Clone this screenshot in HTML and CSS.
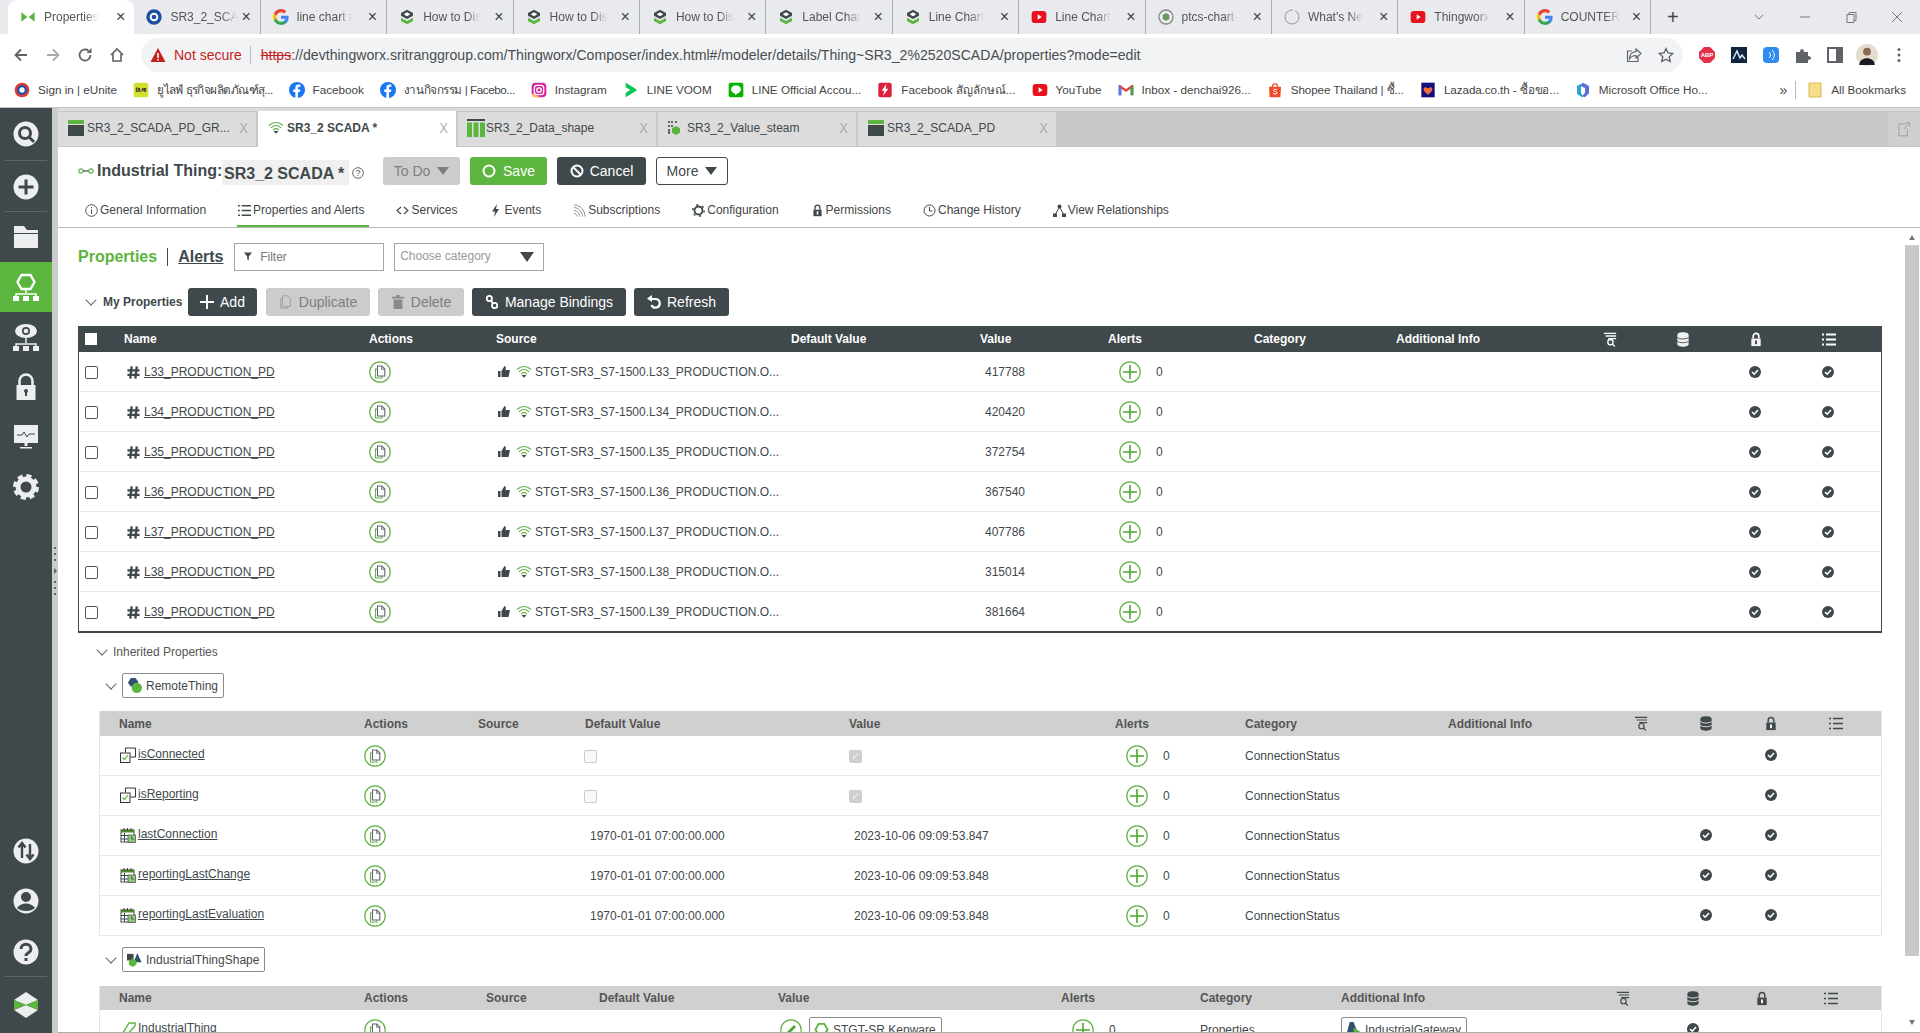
FILE: index.html
```html
<!DOCTYPE html>
<html lang="en">
<head>
<meta charset="utf-8">
<title>Properties</title>
<link rel="stylesheet" href="styles.css">
</head>
<body>
<svg class="sprite" aria-hidden="true">
<symbol id="g" viewBox="0 0 24 24"><path fill="#4285F4" d="M23.500 12.300c0-.8-.1-1.600-.2-2.300H12v4.500h6.500c-.3 1.500-1.100 2.700-2.400 3.500v3h3.900c2.300-2.100 3.500-5.200 3.500-8.700z"/><path fill="#34A853" d="M12 24c3.200 0 6-1.100 8-2.900l-3.900-3c-1.100.7-2.500 1.200-4.100 1.200-3.100 0-5.800-2.100-6.700-5H1.300v3.100C3.300 21.300 7.300 24 12 24z"/><path fill="#FBBC05" d="M5.300 14.300c-.5-1.500-.5-3.100 0-4.600V6.600H1.300c-1.700 3.300-1.700 7.500 0 10.800z"/><path fill="#EA4335" d="M12 4.800c1.800 0 3.300.6 4.600 1.800l3.400-3.400C17.900 1.200 15.200 0 12 0 7.300 0 3.300 2.700 1.300 6.600l4 3.100c.9-2.900 3.600-4.900 6.700-4.900z"/></symbol>
<symbol id="yt" viewBox="0 0 24 24"><rect x="1" y="3" width="22" height="18" rx="5" fill="#e8121e"/><path d="M10 8l6 4-6 4z" fill="#fff"/></symbol>
<symbol id="ptc" viewBox="0 0 24 24"><path d="M12 1l9 5v4l-9 5-9-5V6z" fill="#3f484b"/><path d="M12 5l5 3-5 3-5-3z" fill="#fff"/><path d="M3 13l9 5 9-5v5l-9 5-9-5z" fill="#5cb53e"/></symbol>
<symbol id="tw" viewBox="0 0 24 24"><path d="M2 5l9 7-9 7zM22 5l-9 7 9 7z" fill="#5cb53e"/></symbol>
<symbol id="blue" viewBox="0 0 24 24"><circle cx="12" cy="12" r="11.500" fill="#1c4fa0"/><circle cx="12" cy="12" r="5" fill="none" stroke="#fff" stroke-width="3"/></symbol>
<symbol id="ptcs" viewBox="0 0 24 24"><circle cx="12" cy="12" r="10.500" fill="#eee" stroke="#888" stroke-width="2"/><path d="M12 6l5 3v6l-5 3-5-3V9z" fill="#6a9a5a"/></symbol>
<symbol id="ring" viewBox="0 0 24 24"><circle cx="12" cy="12" r="10.500" fill="none" stroke="#888" stroke-width="1.300" stroke-dasharray="50 4"/></symbol>
<symbol id="fb" viewBox="0 0 24 24"><circle cx="12" cy="12" r="12" fill="#1877f2"/><path d="M13.500 24v-9h3l.6-3.600h-3.600V9.200c0-1 .5-1.900 2-1.900h1.700V4.200s-1.500-.3-3-.3c-3 0-4.700 1.800-4.700 4.800v2.700H6.300V15h3.200v9z" fill="#fff"/></symbol>
<symbol id="ig" viewBox="0 0 24 24"><rect x="1" y="1" width="22" height="22" rx="6" fill="#d6249f"/><path d="M1 17v1a5 5 0 0 0 5 5h8z" fill="#fdc468"/><rect x="5" y="5" width="14" height="14" rx="4" fill="none" stroke="#fff" stroke-width="2"/><circle cx="12" cy="12" r="3.300" fill="none" stroke="#fff" stroke-width="2"/></symbol>
<symbol id="voom" viewBox="0 0 24 24"><path d="M4 1l16 10v2L4 23v-7l7-4-7-4z" fill="#06c755"/></symbol>
<symbol id="lineoa" viewBox="0 0 24 24"><rect x="1" y="1" width="22" height="22" rx="3" fill="#06b100"/><ellipse cx="12" cy="11" rx="7.500" ry="6" fill="#fff"/><path d="M10 16l1 4 4-4z" fill="#fff"/></symbol>
<symbol id="fbpage" viewBox="0 0 24 24"><rect x="2" y="1" width="20" height="22" rx="3" fill="#e01f3d"/><path d="M14 3l-7 10h4l-2 8 8-11h-4z" fill="#fff"/></symbol>
<symbol id="gm" viewBox="0 0 24 24"><path d="M1 5v15h4V10l7 5 7-5v10h4V5l-2-1-9 7-9-7z" fill="#ea4335"/><path d="M1 5v15h4V8z" fill="#4285f4"/><path d="M23 5v15h-4V8z" fill="#34a853"/></symbol>
<symbol id="shopee" viewBox="0 0 24 24"><path d="M3 7h18l-1 16H4z" fill="#ee4d2d"/><path d="M8 8c0-7 8-7 8 0" fill="none" stroke="#ee4d2d" stroke-width="2"/><path d="M15 12c-2-2-6-1-5 1s5 1 5 3-4 3-6 1" fill="none" stroke="#fff" stroke-width="1.500"/></symbol>
<symbol id="laz" viewBox="0 0 24 24"><rect x="2" y="1" width="20" height="22" fill="#12127a"/><path d="M12 19c-9-6-7-11-4-11 2 0 4 2 4 2s2-2 4-2c3 0 5 5-4 11z" fill="#f36d3a"/></symbol>
<symbol id="ms" viewBox="0 0 24 24"><path d="M12 1l9 5v11l-6 6-4-2 4-5V9l-7-3z" fill="#5b6fd8"/><path d="M3 6l9-5-3 5v11l4 5-2 1-8-5z" fill="#2aa3d8"/></symbol>
<symbol id="unite" viewBox="0 0 24 24"><circle cx="12" cy="12" r="11" fill="#e53a2f"/><circle cx="12" cy="12" r="7.500" fill="#1f4fa8"/><circle cx="12" cy="12" r="4" fill="#fff"/></symbol>
<symbol id="ulh" viewBox="0 0 24 24"><rect x="1" y="1" width="22" height="22" rx="4" fill="#d2df2c"/><path d="M5 9v5h3V9zM10 9v5h2M14 9v5l3-5v5h2V9" fill="none" stroke="#333" stroke-width="1.500"/></symbol>

<symbol id="hash" viewBox="0 0 14 14"><path d="M5 .5L3.500 13.500M10.500 .5L9 13.500M.5 4.800h13M.5 9.500h13" fill="none" stroke="#3f484b" stroke-width="2.500"/></symbol>
<symbol id="act" viewBox="0 0 22 22"><circle cx="11" cy="11" r="10.200" fill="none" stroke="#62b24a" stroke-width="1.200"/><path d="M8.500 8H6.500V17h6.500v-2" fill="none" stroke="#62b24a" stroke-width="1.100"/><path d="M8.500 5h4.300l3 3V15H8.500z" fill="none" stroke="#5f686b" stroke-width="1.100"/><path d="M12.500 5v3.300h3.300" fill="none" stroke="#5f686b" stroke-width=".8"/></symbol>
<symbol id="plus" viewBox="0 0 22 22"><circle cx="11" cy="11" r="10.200" fill="none" stroke="#62b24a" stroke-width="1.200"/><path d="M11 4v14M4 11h14" stroke="#4fa72f" stroke-width="1.600"/></symbol>
<symbol id="pencil" viewBox="0 0 22 22"><circle cx="11" cy="11" r="10.200" fill="none" stroke="#62b24a" stroke-width="1.200"/><path d="M6 16l1-3 7-7 2 2-7 7z" fill="#4fa72f"/></symbol>
<symbol id="chk" viewBox="0 0 12 12"><circle cx="6" cy="6" r="6" fill="#3f484b"/><path d="M3 6l2.200 2.200L9 4" fill="none" stroke="#fff" stroke-width="1.600"/></symbol>
<symbol id="wifi" viewBox="0 0 16 13"><path d="M1 4.500c4-4 10-4 14 0M3 6.800c3-3 7-3 10 0M5.200 9c1.600-1.500 4-1.500 5.600 0" fill="none" stroke="#62b24a" stroke-width="1.100"/><path d="M5.500 10h5L8 12.800z" fill="#3f484b"/></symbol>
<symbol id="thumb" viewBox="0 0 12 11"><rect x="0" y="5" width="2.500" height="6" fill="#3f484b"/><path d="M3.500 5L6.500 0c1.500 0 1.500 2 1 4H12L10.500 11h-7z" fill="#3f484b"/></symbol>
<symbol id="boolp" viewBox="0 0 16 16"><path d="M5.500 5.500V1h10v9H10.500" fill="none" stroke="#333" stroke-width="1"/><rect x=".5" y="6" width="9.500" height="9.500" fill="#fff" stroke="#333"/><path d="M2.500 10.500l2 2L8 8" fill="none" stroke="#5cb53e" stroke-width="1.200"/></symbol>
<symbol id="dt" viewBox="0 0 16 16"><rect x="1" y="3" width="13" height="12" fill="#fff" stroke="#3f484b"/><path d="M1 2.500h13v3H1z" fill="#4c8a32"/><path d="M4 1v3M7.500 1v3M11 1v3M1 8.500h7M1 12h7M4.500 6v9" stroke="#3f484b"/><rect x="8" y="8" width="7.500" height="7.500" fill="#8fcb7a" stroke="#3f484b" stroke-width=".7"/><path d="M11.700 9.500v2.500h2" fill="none" stroke="#333" stroke-width=".8"/></symbol>
<symbol id="int" viewBox="0 0 16 16"><path d="M1 15L9 2h6v3l-9 10z" fill="none" stroke="#5cb53e" stroke-width="1.400"/></symbol>
<symbol id="rem" viewBox="0 0 16 16"><path d="M4 0h5l3 4-3 5H4L1 5z" fill="#31506e"/><circle cx="10.500" cy="10.500" r="5.500" fill="#5cb53e"/></symbol>
<symbol id="shape" viewBox="0 0 16 16"><rect x="0" y="2" width="7" height="7" fill="#3f484b"/><path d="M11 1l4.500 10H7z" fill="#31506e"/><path d="M6 7l4 2.300v4.400L6 16l-4-2.300V9.300z" fill="#5cb53e"/></symbol>
<symbol id="hexg" viewBox="0 0 16 16"><path d="M5 2h6l3.500 6L11 14H5L1.500 8z" fill="#fff" stroke="#5cb53e" stroke-width="2"/></symbol>
<symbol id="gate" viewBox="0 0 16 16"><path d="M4 0h4l6 15H0z" fill="#31506e"/><path d="M8 6l7 4v6H8z" fill="#5cb53e"/></symbol>
<symbol id="hq" viewBox="0 0 16 16"><path d="M1 1h14M3 4h12M6 7h9" stroke="#fff" stroke-width="1.500"/><circle cx="8.500" cy="11" r="3" fill="none" stroke="#fff" stroke-width="1.500"/><path d="M10.500 13l3 3" stroke="#fff" stroke-width="1.500"/></symbol>
<symbol id="hdb" viewBox="0 0 14 16"><path d="M1 3c0-3.500 12-3.500 12 0v10c0 3.500-12 3.500-12 0z" fill="#f2f2f2"/><path d="M1 6c3 2 9 2 12 0M1 10c3 2 9 2 12 0" fill="none" stroke="#555"/></symbol>
<symbol id="hlock" viewBox="0 0 12 16"><path d="M3 7V4.500a3 3 0 0 1 6 0V7" fill="none" stroke="#fff" stroke-width="1.800"/><rect x="1" y="7" width="10" height="8" fill="#f2f2f2"/><rect x="5" y="9" width="2" height="4" fill="#3f484b"/></symbol>
<symbol id="hlist" viewBox="0 0 14 14"><path d="M0 2h2M4 2h10M0 7h2M4 7h10M0 12h2M4 12h10" stroke="#fff" stroke-width="2.200"/></symbol>
<symbol id="dlist" viewBox="0 0 14 14"><path d="M0 2h2M4 2h10M0 7h2M4 7h10M0 12h2M4 12h10" stroke="#3f484b" stroke-width="1.600"/></symbol>
<symbol id="dq" viewBox="0 0 16 16"><path d="M1 1h14M3 4h12M6 7h9" stroke="#3f484b" stroke-width="1.300"/><circle cx="8.500" cy="11" r="3" fill="none" stroke="#3f484b" stroke-width="1.300"/><path d="M10.500 13l3 3" stroke="#3f484b" stroke-width="1.300"/></symbol>
<symbol id="ddb" viewBox="0 0 14 16"><path d="M1 3c0-3.500 12-3.500 12 0v10c0 3.500-12 3.500-12 0z" fill="#3f484b"/><path d="M1 6c3 2 9 2 12 0M1 10c3 2 9 2 12 0" fill="none" stroke="#ddd"/></symbol>
<symbol id="dlock" viewBox="0 0 12 16"><path d="M3 7V4.500a3 3 0 0 1 6 0V7" fill="none" stroke="#3f484b" stroke-width="1.600"/><rect x="1" y="7" width="10" height="8" fill="#3f484b"/><rect x="5" y="9" width="2" height="4" fill="#fff"/></symbol>

<symbol id="r-search" viewBox="0 0 28 28"><circle cx="14" cy="14" r="12.500" fill="#eceef0"/><circle cx="13" cy="13" r="5.500" fill="none" stroke="#3f484b" stroke-width="3"/><path d="M17 17l5 5" stroke="#3f484b" stroke-width="3"/></symbol>
<symbol id="r-plus" viewBox="0 0 28 28"><circle cx="14" cy="14" r="12.500" fill="#eceef0"/><path d="M14 6.500v15M6.500 14h15" stroke="#3f484b" stroke-width="3"/></symbol>
<symbol id="r-folder" viewBox="0 0 28 28"><path d="M2 3h10l3 4h11v3H2z" fill="#eceef0"/><rect x="2" y="11" width="24" height="14" fill="#eceef0"/></symbol>
<symbol id="r-thing" viewBox="0 0 28 28"><path d="M9.500 2h9l4 7-4 7h-9l-4-7z" fill="none" stroke="#fff" stroke-width="2.400"/><path d="M14 16v4M4 25v-4h20v4" fill="none" stroke="#fff" stroke-width="1.500"/><rect x="1" y="23" width="6" height="5" fill="#fff"/><rect x="11" y="23" width="6" height="5" fill="#fff"/><rect x="21" y="23" width="6" height="5" fill="#fff"/></symbol>
<symbol id="r-eye" viewBox="0 0 28 28"><ellipse cx="14" cy="8" rx="11" ry="7" fill="#eceef0"/><circle cx="14" cy="8" r="4" fill="#3f484b"/><circle cx="14" cy="8" r="2.300" fill="#eceef0"/><path d="M14 15v5M4 25v-4h20v4" fill="none" stroke="#eceef0" stroke-width="1.500"/><rect x="1" y="23" width="6" height="5" fill="#eceef0"/><rect x="11" y="23" width="6" height="5" fill="#eceef0"/><rect x="21" y="23" width="6" height="5" fill="#eceef0"/></symbol>
<symbol id="r-lock" viewBox="0 0 28 28"><path d="M7.500 12V8a6.500 6.500 0 0 1 13 0v4" fill="none" stroke="#eceef0" stroke-width="2.500"/><rect x="4.500" y="12" width="19" height="15" fill="#eceef0"/><circle cx="14" cy="18" r="2" fill="#3f484b"/><rect x="13" y="18" width="2" height="5" fill="#3f484b"/></symbol>
<symbol id="r-mon" viewBox="0 0 28 28"><rect x="2" y="2" width="24" height="18" fill="#eceef0"/><path d="M5 12h5l2-3 3 5 2-3h6" fill="none" stroke="#3f484b" stroke-width="1"/><path d="M12.500 20h3v3h-3zM8 24h12v1.500H8z" fill="#eceef0"/></symbol>
<symbol id="r-gear" viewBox="0 0 28 28"><circle cx="14" cy="14" r="8" fill="none" stroke="#eceef0" stroke-width="5"/><circle cx="14" cy="14" r="11" fill="none" stroke="#eceef0" stroke-width="4" stroke-dasharray="5 3.640"/></symbol>
<symbol id="r-xfer" viewBox="0 0 28 28"><circle cx="14" cy="14" r="12.500" fill="#eceef0"/><path d="M10 21V7M6.500 10.500L10 6l3.500 4.500M18 7v14M14.500 17.500L18 22l3.500-4.500" fill="none" stroke="#3f484b" stroke-width="2.400"/></symbol>
<symbol id="r-user" viewBox="0 0 28 28"><circle cx="14" cy="14" r="12.500" fill="#eceef0"/><circle cx="14" cy="10" r="5" fill="#3f484b"/><path d="M5 21c4-6 14-6 18 0-4 4-14 4-18 0z" fill="#3f484b"/></symbol>
<symbol id="r-help" viewBox="0 0 28 28"><circle cx="14" cy="14" r="12.500" fill="#eceef0"/><path d="M9 11c0-6.500 10-6.500 10 0 0 4-5 3.500-5 7" fill="none" stroke="#3f484b" stroke-width="3"/><rect x="12.500" y="20" width="3" height="3" fill="#3f484b"/></symbol>
<symbol id="r-logo" viewBox="0 0 28 28"><path d="M14 1l12 8-12 5-12-5zM14 27l12-8-12-5-12 5z" fill="#eceef0"/><path d="M2 9l12 5-12 5zM26 9l-12 5 12 5z" fill="#5cb53e"/></symbol>
</svg>

<header class="tabstrip">
  <div class="ctab ctab-on"><svg class="fav"><use href="#tw"/></svg><span class="ctitle">Properties</span><span class="cx">×</span></div>
  <div class="ctab"><svg class="fav"><use href="#blue"/></svg><span class="ctitle">SR3_2_SCA</span><span class="cx">×</span></div>
  <div class="ctab"><svg class="fav"><use href="#g"/></svg><span class="ctitle">line chart t</span><span class="cx">×</span></div>
  <div class="ctab"><svg class="fav"><use href="#ptc"/></svg><span class="ctitle">How to Dis</span><span class="cx">×</span></div>
  <div class="ctab"><svg class="fav"><use href="#ptc"/></svg><span class="ctitle">How to Dis</span><span class="cx">×</span></div>
  <div class="ctab"><svg class="fav"><use href="#ptc"/></svg><span class="ctitle">How to Dis</span><span class="cx">×</span></div>
  <div class="ctab"><svg class="fav"><use href="#ptc"/></svg><span class="ctitle">Label Char</span><span class="cx">×</span></div>
  <div class="ctab"><svg class="fav"><use href="#ptc"/></svg><span class="ctitle">Line Chart</span><span class="cx">×</span></div>
  <div class="ctab"><svg class="fav"><use href="#yt"/></svg><span class="ctitle">Line Chart</span><span class="cx">×</span></div>
  <div class="ctab"><svg class="fav"><use href="#ptcs"/></svg><span class="ctitle">ptcs-chart-</span><span class="cx">×</span></div>
  <div class="ctab"><svg class="fav"><use href="#ring"/></svg><span class="ctitle">What's Ne</span><span class="cx">×</span></div>
  <div class="ctab"><svg class="fav"><use href="#yt"/></svg><span class="ctitle">Thingworx</span><span class="cx">×</span></div>
  <div class="ctab ctab-last"><svg class="fav"><use href="#g"/></svg><span class="ctitle">COUNTER</span><span class="cx">×</span></div>
  <span class="newtab">+</span>
  <div class="winctl">
    <svg class="w-ic" viewBox="0 0 12 12"><path d="M2 4l4 4 4-4" fill="none" stroke="#777"/></svg>
    <svg class="w-ic" viewBox="0 0 12 12"><path d="M1 6h10" stroke="#777"/></svg>
    <svg class="w-ic" viewBox="0 0 12 12"><path d="M2 3.500h7v8H2zM4 3.500V1.500h7v8H9" fill="none" stroke="#777"/></svg>
    <svg class="w-ic" viewBox="0 0 12 12"><path d="M1 1l10 10M11 1L1 11" stroke="#777"/></svg>
  </div>
</header>

<div class="toolbar">
  <svg class="t-ic" viewBox="0 0 16 16"><path d="M14 8H2.500M8 2.500L2.500 8 8 13.500" fill="none" stroke="#5f6368" stroke-width="1.800"/></svg>
  <svg class="t-ic" viewBox="0 0 16 16"><path d="M2 8h11.500M8 2.500L13.500 8 8 13.500" fill="none" stroke="#a8abaf" stroke-width="1.800"/></svg>
  <svg class="t-ic" viewBox="0 0 16 16"><path d="M13.500 8A5.500 5.500 0 1 1 11.500 3.800" fill="none" stroke="#5f6368" stroke-width="1.800"/><path d="M9.500 6H14.500V1z" fill="#5f6368"/></svg>
  <svg class="t-ic" viewBox="0 0 16 16"><path d="M2 8L8 2l6 6M4 7v7h8V7" fill="none" stroke="#5f6368" stroke-width="1.600"/></svg>
  <div class="omni">
    <svg class="warn" viewBox="0 0 16 16"><path d="M8 1l7.500 14H.5z" fill="#c5221f"/><path d="M7.200 6h1.600v5H7.200zM7.200 12h1.600v1.500H7.200z" fill="#fff"/></svg>
    <span class="notsec">Not secure</span><span class="omsep"></span>
    <span class="url"><s class="https">https</s>://devthingworx.sritranggroup.com/Thingworx/Composer/index.html#/modeler/details/Thing~SR3_2%2520SCADA/properties?mode=edit</span>
    <svg class="o-ic" viewBox="0 0 16 16"><path d="M10 2l5 4.500-5 4.500V8.500C7 8.500 5 9.500 3.500 12c0-4 2-7 6.500-7.500zM12 10v4.500H1.500V4H6" fill="none" stroke="#5f6368" stroke-width="1.200"/></svg>
    <svg class="o-ic o-star" viewBox="0 0 16 16"><path d="M8 1.500l2 4.500 4.800.5-3.600 3.200 1 4.800L8 12.200l-4.200 2.300 1-4.800L1.200 6.500 6 6z" fill="none" stroke="#5f6368" stroke-width="1.300"/></svg>
  </div>
  <div class="exts">
    <svg class="e-ic" viewBox="0 0 16 16"><path d="M5 0h6l5 5v6l-5 5H5l-5-5V5z" fill="#e5304c"/><text class="abp" x="8" y="10.300">ABP</text></svg>
    <svg class="e-ic" viewBox="0 0 16 16"><rect width="16" height="16" fill="#10243e"/><path d="M2 12l4-8 3 7 2-3 3 4" fill="none" stroke="#cfe8ff" stroke-width="1.500"/></svg>
    <svg class="e-ic" viewBox="0 0 16 16"><rect width="16" height="16" rx="4" fill="#2f8bf0"/><path d="M6 5c2 2 2 4 0 6M9 3c3 3 3 7 0 10" fill="none" stroke="#fff"/></svg>
    <svg class="e-ic" viewBox="0 0 16 16"><path d="M1 5h4c0-4 4-4 4 0h4v4c4 0 4 4 0 4v3H1z" fill="#5f6368"/></svg>
    <svg class="e-ic" viewBox="0 0 16 16"><path d="M1 1h14v14H1z" fill="none" stroke="#5f6368" stroke-width="2"/><rect x="9" y="1" width="6" height="14" fill="#5f6368"/></svg>
    <svg class="e-ic e-av" viewBox="0 0 20 20"><circle cx="10" cy="10" r="10" fill="#e4dccf"/><circle cx="10" cy="7" r="3.500" fill="#8b6a50"/><path d="M3 19c0-8 14-8 14 0z" fill="#1b1b24"/></svg>
    <svg class="e-ic" viewBox="0 0 16 16"><circle cx="8" cy="2.500" r="1.500" fill="#5f6368"/><circle cx="8" cy="8" r="1.500" fill="#5f6368"/><circle cx="8" cy="13.500" r="1.500" fill="#5f6368"/></svg>
  </div>
</div>

<nav class="bookmarks">
  <span class="bm"><svg class="fav"><use href="#unite"/></svg>Sign in | eUnite</span>
  <span class="bm ls-a"><svg class="fav"><use href="#ulh"/></svg>ยูไลฟ์ ธุรกิจผลิตภัณฑ์สุ...</span>
  <span class="bm"><svg class="fav"><use href="#fb"/></svg>Facebook</span>
  <span class="bm ls-b"><svg class="fav"><use href="#fb"/></svg>งานกิจกรรม | Facebo...</span>
  <span class="bm"><svg class="fav"><use href="#ig"/></svg>Instagram</span>
  <span class="bm"><svg class="fav"><use href="#voom"/></svg>LINE VOOM</span>
  <span class="bm"><svg class="fav"><use href="#lineoa"/></svg>LINE Official Accou...</span>
  <span class="bm"><svg class="fav"><use href="#fbpage"/></svg>Facebook สัญลักษณ์...</span>
  <span class="bm"><svg class="fav"><use href="#yt"/></svg>YouTube</span>
  <span class="bm"><svg class="fav"><use href="#gm"/></svg>Inbox - denchai926...</span>
  <span class="bm ls-c"><svg class="fav"><use href="#shopee"/></svg>Shopee Thailand | ซื้...</span>
  <span class="bm ls-d"><svg class="fav"><use href="#laz"/></svg>Lazada.co.th - ซื้อขอ...</span>
  <span class="bm"><svg class="fav"><use href="#ms"/></svg>Microsoft Office Ho...</span>
  <span class="bm-end">
    <span class="more">»</span><span class="bmsep"></span>
    <span class="bm"><svg class="fav" viewBox="0 0 16 16"><path d="M2 1h12v14H2z" fill="#f7dc8a" stroke="#d9b94f"/></svg>All Bookmarks</span>
  </span>
</nav>

<div class="app">
  <aside class="rail">
    <div class="ri ri-sep ri-first"><svg><use href="#r-search"/></svg></div>
    <div class="ri ri-sep"><svg><use href="#r-plus"/></svg></div>
    <div class="ri"><svg><use href="#r-folder"/></svg></div>
    <div class="ri ri-on"><svg><use href="#r-thing"/></svg></div>
    <div class="ri"><svg><use href="#r-eye"/></svg></div>
    <div class="ri"><svg><use href="#r-lock"/></svg></div>
    <div class="ri"><svg><use href="#r-mon"/></svg></div>
    <div class="ri"><svg><use href="#r-gear"/></svg></div>
    <div class="ri ri-push"><svg><use href="#r-xfer"/></svg></div>
    <div class="ri"><svg><use href="#r-user"/></svg></div>
    <div class="ri ri-sep"><svg><use href="#r-help"/></svg></div>
    <div class="ri ri-logo"><svg><use href="#r-logo"/></svg></div>
  </aside>
  <div class="gutter"><i></i><i></i><i></i><b></b><i></i><i></i><i></i></div>

  <main class="main">
    <div class="wtabs">
      <div class="wtab"><span class="wi wi-pd"></span><span class="wt">SR3_2_SCADA_PD_GR...</span><span class="wx">X</span></div>
      <div class="wtab wtab-on"><svg class="wi-wifi"><use href="#wifi"/></svg><span class="wt wt-b">SR3_2 SCADA *</span><span class="wx">X</span></div>
      <div class="wtab"><svg class="wi-ds" viewBox="0 0 18 18"><path d="M0 0h18v2H0z" fill="#3f484b"/><path d="M0 3.500h5V18H0zM6.500 3.500h5V18h-5zM13 3.500h5V18h-5z" fill="#5cb53e"/></svg><span class="wt wt-ds">SR3_2_Data_shape</span><span class="wx">X</span></div>
      <div class="wtab"><svg class="wi-vs" viewBox="0 0 12 14"><path d="M0 0h2v2H0zM3 0h2v2H3zM7 0h2v2H7zM0 4h2v2H0zM3 4h2v2H3zM0 8h2v5H0z" fill="#666"/><path d="M8 5l4 2.300v4.400L8 14l-4-2.300V7.300z" fill="#5cb53e"/></svg><span class="wt">SR3_2_Value_steam</span><span class="wx">X</span></div>
      <div class="wtab"><span class="wi wi-pd"></span><span class="wt">SR3_2_SCADA_PD</span><span class="wx">X</span></div>
      <div class="wexp"><svg viewBox="0 0 14 18"><path d="M9 3H1v14h10V9M7 9l6-7M9 1.500h4.500V6" fill="none" stroke="#999"/></svg></div>
    </div>

    <section class="entity">
      <div class="titlerow">
        <svg class="ti-ic" viewBox="0 0 16 6"><circle cx="3" cy="3" r="2.200" fill="none" stroke="#62b24a" stroke-width="1.200"/><path d="M5 3h6" stroke="#3f484b" stroke-width="1.200"/><circle cx="13" cy="3" r="2.200" fill="none" stroke="#62b24a" stroke-width="1.200"/></svg>
        <span class="ttype">Industrial Thing:</span>
        <span class="tname">SR3_2 SCADA *</span>
        <svg class="ti-help" viewBox="0 0 12 12"><circle cx="6" cy="6" r="5.300" fill="none" stroke="#555" stroke-width=".9"/><text class="ti-q" x="6" y="9">?</text></svg>
        <button class="btn btn-dis btn-todo">To Do<i class="caret caret-grey"></i></button>
        <button class="btn btn-green btn-save"><svg viewBox="0 0 14 14"><circle cx="7" cy="7" r="5.500" fill="none" stroke="#fff" stroke-width="2"/></svg>Save</button>
        <button class="btn btn-dark btn-cancel"><svg viewBox="0 0 14 14"><circle cx="7" cy="7" r="5.500" fill="none" stroke="#fff" stroke-width="2"/><path d="M3 3l8 8" stroke="#fff" stroke-width="2"/></svg>Cancel</button>
        <button class="btn btn-line btn-more">More<i class="caret"></i></button>
      </div>
      <div class="navtabs">
        <span class="nt"><svg viewBox="0 0 13 13"><circle cx="6.500" cy="6.500" r="5.800" fill="none" stroke="#555"/><path d="M6.500 5.500v4.500M6.500 3v1.300" stroke="#555"/></svg>General Information</span>
        <span class="nt nt-on"><svg viewBox="0 0 13 13"><use href="#dlist"/></svg>Properties and Alerts</span>
        <span class="nt"><svg viewBox="0 0 13 13"><path d="M5 3L1 6.500 5 10M8 3l4 3.500L8 10" fill="none" stroke="#444" stroke-width="1.100"/></svg>Services</span>
        <span class="nt"><svg viewBox="0 0 13 13"><path d="M8 0L3 7.500h3L5 13l5-8H7z" fill="#3f484b"/></svg>Events</span>
        <span class="nt"><svg viewBox="0 0 13 13"><path d="M1 3.500c4 0 8.500 4.500 8.500 9M1 6.500c3 0 5.500 3 5.500 6M1 9.500c1.500 0 3 1.500 3 3M1 1c6 0 11 5 11 11.500" fill="none" stroke="#777" stroke-width=".8"/></svg>Subscriptions</span>
        <span class="nt"><svg viewBox="0 0 13 13"><circle cx="6.500" cy="6.500" r="4" fill="none" stroke="#3f484b" stroke-width="1.800"/><circle cx="6.500" cy="6.500" r="5.700" fill="none" stroke="#3f484b" stroke-width="1.500" stroke-dasharray="2 3.970"/></svg>Configuration</span>
        <span class="nt"><svg viewBox="0 0 13 13"><use href="#dlock"/></svg>Permissions</span>
        <span class="nt"><svg viewBox="0 0 13 13"><circle cx="6.500" cy="6.500" r="5.500" fill="none" stroke="#444"/><path d="M6.500 3v4h3" fill="none" stroke="#444"/></svg>Change History</span>
        <span class="nt"><svg viewBox="0 0 13 13"><circle cx="6.500" cy="2.500" r="2" fill="#3f484b"/><path d="M6 4L2.500 10M7 4l3.500 6" stroke="#3f484b"/><rect x="0" y="9.500" width="4" height="3.500" fill="#3f484b"/><rect x="9" y="9.500" width="4" height="3.500" fill="#3f484b"/></svg>View Relationships</span>
      </div>
    </section>

    <div class="scroller">
      <div class="content">
        <div class="filterrow">
          <span class="f-prop">Properties</span><span class="f-sep"></span><span class="f-alert">Alerts</span>
          <span class="f-input"><svg viewBox="0 0 10 10"><path d="M0 0h10L6 5v5L4 8.500V5z" fill="#3f484b"/></svg>Filter</span>
          <span class="f-select">Choose category<i class="caret-big"></i></span>
        </div>
        <div class="actionrow">
          <i class="chev"></i><span class="mine">My Properties</span>
          <button class="btn btn-dark btn-add"><svg viewBox="0 0 14 14"><path d="M7 0v14M0 7h14" stroke="#fff" stroke-width="2"/></svg>Add</button>
          <button class="btn btn-dis btn-dup"><svg viewBox="0 0 14 16"><path d="M3 4H1v11h8v-2" fill="none" stroke="#999"/><path d="M3 1h6l3 3v9H3z" fill="none" stroke="#999"/></svg>Duplicate</button>
          <button class="btn btn-dis btn-del"><svg viewBox="0 0 14 16"><path d="M0 2h14v2H0zM5 0h4v2H5zM2 5h10v11H2z" fill="#8a8a8a"/></svg>Delete</button>
          <button class="btn btn-dark btn-bind"><svg viewBox="0 0 14 16"><circle cx="4" cy="4" r="3" fill="none" stroke="#fff" stroke-width="2"/><circle cx="10" cy="12" r="3" fill="none" stroke="#fff" stroke-width="2"/><path d="M6 6l2 4" stroke="#fff" stroke-width="2"/></svg>Manage Bindings</button>
          <button class="btn btn-dark btn-ref"><svg viewBox="0 0 14 14"><path d="M4 4h4.500a4.300 4.300 0 1 1-4 6" fill="none" stroke="#fff" stroke-width="2.200"/><path d="M5 0v7L0 3.500z" fill="#fff"/></svg>Refresh</button>
        </div>

        <div class="tbl tbl-own">
          <div class="thead t1"><span class="c1"><i class="cb cb-white"></i></span><span class="c2">Name</span><span class="c3">Actions</span><span class="c4">Source</span><span class="c5">Default Value</span><span class="c6">Value</span><span class="c7">Alerts</span><span class="c8">Category</span><span class="c9">Additional Info</span><svg class="c10 hi"><use href="#hq"/></svg><svg class="c11 hi"><use href="#hdb"/></svg><svg class="c12 hi"><use href="#hlock"/></svg><svg class="c13 hi"><use href="#hlist"/></svg></div>
          <div class="trow t1"><span class="c1"><i class="cb"></i></span><span class="c2 nm nm-1"><svg class="i14"><use href="#hash"/></svg><a>L33_PRODUCTION_PD</a></span><svg class="c3 i22"><use href="#act"/></svg><span class="c4 src"><svg class="th"><use href="#thumb"/></svg><svg class="wf"><use href="#wifi"/></svg>STGT-SR3_S7-1500.L33_PRODUCTION.O...</span><span class="c6 pad5">417788</span><span class="c7 al"><svg class="i22"><use href="#plus"/></svg>0</span><svg class="c12 ck"><use href="#chk"/></svg><svg class="c13 ck"><use href="#chk"/></svg></div>
          <div class="trow t1"><span class="c1"><i class="cb"></i></span><span class="c2 nm nm-1"><svg class="i14"><use href="#hash"/></svg><a>L34_PRODUCTION_PD</a></span><svg class="c3 i22"><use href="#act"/></svg><span class="c4 src"><svg class="th"><use href="#thumb"/></svg><svg class="wf"><use href="#wifi"/></svg>STGT-SR3_S7-1500.L34_PRODUCTION.O...</span><span class="c6 pad5">420420</span><span class="c7 al"><svg class="i22"><use href="#plus"/></svg>0</span><svg class="c12 ck"><use href="#chk"/></svg><svg class="c13 ck"><use href="#chk"/></svg></div>
          <div class="trow t1"><span class="c1"><i class="cb"></i></span><span class="c2 nm nm-1"><svg class="i14"><use href="#hash"/></svg><a>L35_PRODUCTION_PD</a></span><svg class="c3 i22"><use href="#act"/></svg><span class="c4 src"><svg class="th"><use href="#thumb"/></svg><svg class="wf"><use href="#wifi"/></svg>STGT-SR3_S7-1500.L35_PRODUCTION.O...</span><span class="c6 pad5">372754</span><span class="c7 al"><svg class="i22"><use href="#plus"/></svg>0</span><svg class="c12 ck"><use href="#chk"/></svg><svg class="c13 ck"><use href="#chk"/></svg></div>
          <div class="trow t1"><span class="c1"><i class="cb"></i></span><span class="c2 nm nm-1"><svg class="i14"><use href="#hash"/></svg><a>L36_PRODUCTION_PD</a></span><svg class="c3 i22"><use href="#act"/></svg><span class="c4 src"><svg class="th"><use href="#thumb"/></svg><svg class="wf"><use href="#wifi"/></svg>STGT-SR3_S7-1500.L36_PRODUCTION.O...</span><span class="c6 pad5">367540</span><span class="c7 al"><svg class="i22"><use href="#plus"/></svg>0</span><svg class="c12 ck"><use href="#chk"/></svg><svg class="c13 ck"><use href="#chk"/></svg></div>
          <div class="trow t1"><span class="c1"><i class="cb"></i></span><span class="c2 nm nm-1"><svg class="i14"><use href="#hash"/></svg><a>L37_PRODUCTION_PD</a></span><svg class="c3 i22"><use href="#act"/></svg><span class="c4 src"><svg class="th"><use href="#thumb"/></svg><svg class="wf"><use href="#wifi"/></svg>STGT-SR3_S7-1500.L37_PRODUCTION.O...</span><span class="c6 pad5">407786</span><span class="c7 al"><svg class="i22"><use href="#plus"/></svg>0</span><svg class="c12 ck"><use href="#chk"/></svg><svg class="c13 ck"><use href="#chk"/></svg></div>
          <div class="trow t1"><span class="c1"><i class="cb"></i></span><span class="c2 nm nm-1"><svg class="i14"><use href="#hash"/></svg><a>L38_PRODUCTION_PD</a></span><svg class="c3 i22"><use href="#act"/></svg><span class="c4 src"><svg class="th"><use href="#thumb"/></svg><svg class="wf"><use href="#wifi"/></svg>STGT-SR3_S7-1500.L38_PRODUCTION.O...</span><span class="c6 pad5">315014</span><span class="c7 al"><svg class="i22"><use href="#plus"/></svg>0</span><svg class="c12 ck"><use href="#chk"/></svg><svg class="c13 ck"><use href="#chk"/></svg></div>
          <div class="trow t1"><span class="c1"><i class="cb"></i></span><span class="c2 nm nm-1"><svg class="i14"><use href="#hash"/></svg><a>L39_PRODUCTION_PD</a></span><svg class="c3 i22"><use href="#act"/></svg><span class="c4 src"><svg class="th"><use href="#thumb"/></svg><svg class="wf"><use href="#wifi"/></svg>STGT-SR3_S7-1500.L39_PRODUCTION.O...</span><span class="c6 pad5">381664</span><span class="c7 al"><svg class="i22"><use href="#plus"/></svg>0</span><svg class="c12 ck"><use href="#chk"/></svg><svg class="c13 ck"><use href="#chk"/></svg></div>
        </div>

        <div class="inh"><i class="chev"></i>Inherited Properties</div>
        <div class="chiprow chiprow-1"><i class="chev"></i><span class="chip"><svg><use href="#rem"/></svg>RemoteThing</span></div>

        <div class="tbl tbl-inh">
          <div class="thead tg t2"><span class="c2">Name</span><span class="c3">Actions</span><span class="c4">Source</span><span class="c5">Default Value</span><span class="c6">Value</span><span class="c7">Alerts</span><span class="c8">Category</span><span class="c9">Additional Info</span><svg class="c10 hi"><use href="#dq"/></svg><svg class="c11 hi"><use href="#ddb"/></svg><svg class="c12 hi"><use href="#dlock"/></svg><svg class="c13 hi"><use href="#dlist"/></svg></div>
          <div class="trow t2"><span class="c2 nm"><svg class="i16"><use href="#boolp"/></svg><a>isConnected</a></span><svg class="c3 i22"><use href="#act"/></svg><span class="c5"><i class="cb cb-off"></i></span><span class="c6"><i class="cb cb-on">✓</i></span><span class="c7 al"><svg class="i22"><use href="#plus"/></svg>0</span><span class="c8">ConnectionStatus</span><svg class="c12 ck"><use href="#chk"/></svg></div>
          <div class="trow t2"><span class="c2 nm"><svg class="i16"><use href="#boolp"/></svg><a>isReporting</a></span><svg class="c3 i22"><use href="#act"/></svg><span class="c5"><i class="cb cb-off"></i></span><span class="c6"><i class="cb cb-on">✓</i></span><span class="c7 al"><svg class="i22"><use href="#plus"/></svg>0</span><span class="c8">ConnectionStatus</span><svg class="c12 ck"><use href="#chk"/></svg></div>
          <div class="trow t2"><span class="c2 nm"><svg class="i16"><use href="#dt"/></svg><a>lastConnection</a></span><svg class="c3 i22"><use href="#act"/></svg><span class="c5 pad5">1970-01-01 07:00:00.000</span><span class="c6 pad5">2023-10-06 09:09:53.847</span><span class="c7 al"><svg class="i22"><use href="#plus"/></svg>0</span><span class="c8">ConnectionStatus</span><svg class="c11 ck"><use href="#chk"/></svg><svg class="c12 ck"><use href="#chk"/></svg></div>
          <div class="trow t2"><span class="c2 nm"><svg class="i16"><use href="#dt"/></svg><a>reportingLastChange</a></span><svg class="c3 i22"><use href="#act"/></svg><span class="c5 pad5">1970-01-01 07:00:00.000</span><span class="c6 pad5">2023-10-06 09:09:53.848</span><span class="c7 al"><svg class="i22"><use href="#plus"/></svg>0</span><span class="c8">ConnectionStatus</span><svg class="c11 ck"><use href="#chk"/></svg><svg class="c12 ck"><use href="#chk"/></svg></div>
          <div class="trow t2"><span class="c2 nm"><svg class="i16"><use href="#dt"/></svg><a>reportingLastEvaluation</a></span><svg class="c3 i22"><use href="#act"/></svg><span class="c5 pad5">1970-01-01 07:00:00.000</span><span class="c6 pad5">2023-10-06 09:09:53.848</span><span class="c7 al"><svg class="i22"><use href="#plus"/></svg>0</span><span class="c8">ConnectionStatus</span><svg class="c11 ck"><use href="#chk"/></svg><svg class="c12 ck"><use href="#chk"/></svg></div>
        </div>

        <div class="chiprow chiprow-2"><i class="chev"></i><span class="chip"><svg><use href="#shape"/></svg>IndustrialThingShape</span></div>

        <div class="tbl tbl-inh tbl-3">
          <div class="thead tg t3"><span class="c2">Name</span><span class="c3">Actions</span><span class="c4">Source</span><span class="c5">Default Value</span><span class="c6">Value</span><span class="c7">Alerts</span><span class="c8">Category</span><span class="c9">Additional Info</span><svg class="c10 hi"><use href="#dq"/></svg><svg class="c11 hi"><use href="#ddb"/></svg><svg class="c12 hi"><use href="#dlock"/></svg><svg class="c13 hi"><use href="#dlist"/></svg></div>
          <div class="trow t3"><span class="c2 nm"><svg class="i16"><use href="#int"/></svg><a>IndustrialThing</a></span><svg class="c3 i22"><use href="#act"/></svg><span class="c6 inf"><svg class="i22"><use href="#pencil"/></svg><span class="chip"><svg><use href="#hexg"/></svg>STGT-SR Kepware</span></span><span class="c7 al"><svg class="i22"><use href="#plus"/></svg>0</span><span class="c8">Properties</span><span class="c9"><span class="chip"><svg><use href="#gate"/></svg>IndustrialGateway</span></span><svg class="c11 ck"><use href="#chk"/></svg></div>
        </div>
      </div>
      <div class="vbar"><i class="up"></i><span class="thumb"></span><span class="vfill"></span><i class="dn"></i></div>
    </div>
  </main>
</div>
</body>
</html>
```
FILE: styles.css
```css
* { box-sizing: border-box; }
html, body { margin: 0; height: 1033px; overflow: hidden; }
body { display: flex; flex-direction: column; font: 12px "Liberation Sans", Arial, "Noto Sans", sans-serif; color: #3f484b; background: #fff; }
button { font-family: inherit; }
.sprite { display: none; }
.fav { width: 16px; height: 16px; flex: none; }

/* browser chrome */
.tabstrip { height: 34px; flex: none; display: flex; align-items: flex-end; padding-left: 8px; background: #e8eaed; }
.ctab { width: 126.4px; height: 34px; flex: none; display: flex; align-items: center; padding: 0 7px 0 12px; color: #555; font-size: 12px; border-right: 1px solid #a9acb0; background-clip: content-box; }
.ctab-on { background: #fff; border-right: 0; border-radius: 9px 9px 0 0; background-clip: border-box; }
.ctab-last { border-right: 1px solid #a9acb0; }
.ctitle { margin-left: 8px; white-space: nowrap; -webkit-mask-image: linear-gradient(90deg, #000 75%, transparent); mask-image: linear-gradient(90deg, #000 75%, transparent); }
.cx { margin-left: auto; margin-right: 2px; font-size: 16px; color: #444; }
.newtab { margin: 0 0 4px 16px; font-size: 20px; line-height: 26px; color: #444; }
.winctl { margin-left: auto; display: flex; gap: 34px; align-self: center; padding-right: 17px; }
.w-ic { width: 12px; height: 12px; }

.toolbar { height: 39px; flex: none; display: flex; align-items: center; padding: 3px 0 0 13px; background: #fff; gap: 16px; }
.t-ic { width: 16px; height: 16px; flex: none; }
.omni { width: 1542px; height: 34px; flex: none; border-radius: 17px; background: #f1f3f4; display: flex; align-items: center; padding-left: 9px; }
.warn { width: 16px; height: 16px; flex: none; }
.notsec { margin-left: 8px; font-size: 14px; color: #c5221f; white-space: nowrap; }
.omsep { width: 1px; height: 18px; margin: 0 10px 0 8px; background: #bbb; flex: none; }
.url { font-size: 14.100px; color: #4a4d51; white-space: nowrap; flex: 1; }
.https { color: #c5221f; }
.o-ic { width: 16px; height: 16px; margin-right: 16px; flex: none; }
.o-star { margin-right: 9px; }
.exts { display: flex; align-items: center; gap: 16px; }
.e-ic { width: 16px; height: 16px; flex: none; }
.e-av { width: 22px; height: 22px; margin: 0 -3px; }
.abp { font: bold 6px "Liberation Sans", sans-serif; fill: #fff; text-anchor: middle; }

.bookmarks { height: 35px; flex: none; display: flex; align-items: center; gap: 16px; padding: 0 14px 1px 14px; background: #fff; border-bottom: 1px solid #c5c5c5; color: #444; font-size: 11.700px; white-space: nowrap; }
.bm { display: flex; align-items: center; gap: 8px; font-family: "Liberation Sans", "Noto Sans", "DejaVu Sans", sans-serif; }
.ls-a { letter-spacing: -.55px; }
.ls-b { letter-spacing: -.45px; }
.ls-c { letter-spacing: -.1px; }
.ls-d { letter-spacing: -.1px; }
.bm-end { margin-left: auto; display: flex; align-items: center; }
.more { font-size: 14px; }
.bmsep { width: 1px; height: 18px; background: #bbb; margin: 0 11px 0 8px; }

/* app frame */
.app { flex: 1; min-height: 0; display: flex; }
.rail { width: 52px; flex: none; background: #3f484b; display: flex; flex-direction: column; padding-top: 1px; }
.ri { height: 50px; flex: none; display: flex; align-items: center; justify-content: center; }
.ri svg { width: 28px; height: 28px; }
.ri-sep { height: 51px; background: linear-gradient(#5d6669, #5d6669) center bottom / 42px 1px no-repeat; }
.ri-first { height: 52px; padding-bottom: 3px; }
.ri-on { background: #5cb53e; }
.ri-push { margin-top: auto; }
.ri-logo { height: 56px; }
.gutter { width: 6px; flex: none; background: #ccc; display: flex; flex-direction: column; align-items: center; justify-content: center; gap: 2px; }
.gutter i { width: 2px; height: 2px; background: #666; display: block; margin: 1px 0; }
.gutter b { width: 0; height: 0; border: 3px solid transparent; border-left: 3px solid #666; border-right: 0; margin: 4px 0; }
.main { flex: 1; min-width: 0; display: flex; flex-direction: column; border-bottom: 1px solid #aaa; }

.wtabs { height: 39px; flex: none; display: flex; align-items: flex-end; gap: 2px; background: #c8c8c8; border-top: 3px solid #dcdcdc; padding-bottom: 1px; }
.wtab { width: 198px; height: 34px; flex: none; background: #dcdcdc; display: flex; align-items: center; padding: 0 8px 3px 10px; gap: 3px; color: #3f484b; }
.wtab-on { background: #fff; height: 36px; margin-bottom: -1px; }
.wt { white-space: nowrap; }
.wt-b { font-weight: bold; }
.wt-ds { margin-left: -2px; }
.wx { margin-left: auto; font-size: 14px; color: #aaa; transform: scaleX(.9); }
.wi-pd { width: 16px; height: 16px; background: linear-gradient(#5cb53e 0 4px, #dcdcdc 4px 5px, #3f484b 5px); }
.wi-wifi { width: 16px; height: 13px; }
.wi-ds { width: 18px; height: 18px; margin-left: -1px; }
.wi-vs { width: 12px; height: 14px; margin-right: 4px; }
.wexp { margin-left: auto; width: 32px; height: 34px; background: #cfcfcf; display: flex; align-items: center; justify-content: center; }
.wexp svg { width: 12px; height: 16px; }

.entity { height: 81px; flex: none; background: #fff; padding-top: 10px; }
.titlerow { height: 28px; display: flex; align-items: center; padding-left: 20px; }
.ti-ic { width: 16px; height: 6px; margin: 0 3px 0 0; flex: none; }
.ttype { font-size: 16px; font-weight: bold; width: 125px; white-space: nowrap; color: #3f484b; margin-top: -1px; }
.tname { width: 127px; height: 25px; margin: 2px 0 0 0; padding: 4px 2px 0; background: #f0f0f0; font-size: 16px; font-weight: bold; line-height: 20px; white-space: nowrap; }
.ti-help { width: 12px; height: 12px; margin: 3px 0 0 3px; flex: none; }
.ti-q { font-size: 9px; text-anchor: middle; fill: #555; }
.btn { height: 28px; border: 0; border-radius: 3px; font-size: 14px; display: inline-flex; align-items: center; justify-content: center; gap: 6px; padding: 0; flex: none; white-space: nowrap; }
.btn svg { width: 14px; height: 14px; flex: none; }
.btn-dis { background: #ccc; color: #7e7e7e; }
.btn-green { background: #5cb53e; color: #fff; }
.btn-dark { background: #3f484b; color: #fff; }
.btn-line { background: #fff; color: #3f484b; border: 1px solid #3f484b; }
.btn-todo { width: 77px; margin-left: 19px; }
.btn-save { width: 77px; margin-left: 10px; gap: 7px; }
.btn-cancel { width: 89px; margin-left: 10px; }
.btn-more { width: 72px; margin-left: 10px; }
.caret { width: 0; height: 0; border: 6px solid transparent; border-top: 8px solid #3f484b; border-bottom: 0; margin-left: 1px; }
.caret-grey { border-top-color: #7e7e7e; }

.navtabs { height: 43px; display: flex; gap: 32px; padding: 0 0 0 27px; border-bottom: 1px solid #bbb; }
.nt { display: flex; align-items: center; gap: 2px; height: 33px; margin-top: 9px; padding: 1px 0 0; white-space: nowrap; color: #444; border-bottom: 2px solid transparent; }
.nt svg { width: 13px; height: 13px; flex: none; }
.nt-on { border-bottom-color: #5cb53e; padding: 1px 5px 0 1px; margin-left: -1px; margin-right: -5px; color: #3f484b; }

.scroller { flex: 1; min-height: 0; display: flex; overflow: hidden; }
.content { flex: 1; min-width: 0; padding: 15px 21px 0 20px; overflow: hidden; }
.filterrow { height: 28px; display: flex; align-items: center; }
.f-prop { font-size: 16px; font-weight: bold; color: #5cb53e; }
.f-sep { width: 1px; height: 18px; background: #3f484b; margin: 0 10px; }
.f-alert { font-size: 16px; font-weight: bold; text-decoration: underline; width: 56px; }
.f-input { width: 150px; height: 28px; border: 1px solid #a5a5a5; display: flex; align-items: center; gap: 8px; padding: 0 0 0 9px; color: #777; }
.f-input svg { width: 8px; height: 9px; margin-top: -2px; }
.f-select { width: 150px; height: 28px; margin-left: 10px; border: 1px solid #a5a5a5; display: flex; align-items: center; justify-content: space-between; padding: 0 9px 2px 5px; color: #999; }
.caret-big { width: 0; height: 0; border: 7px solid transparent; border-top: 10px solid #3f484b; border-bottom: 0; margin-top: 2px; }

.actionrow { height: 28px; margin-top: 17px; display: flex; align-items: center; gap: 8px; padding-left: 7px; }
.chev { width: 8px; height: 8px; border: solid #666; border-width: 0 1px 1px 0; transform: rotate(45deg); display: block; flex: none; margin: -4px 3px 0 2px; }
.mine { font-weight: bold; width: 80px; margin-left: -3px; white-space: nowrap; margin-right: -3px; }
.btn-add { width: 69px; }
.btn-dup { width: 104px; margin-left: 1px; }
.btn-del { width: 86px; }
.btn-bind { width: 154px; }
.btn-ref { width: 95px; }

.tbl { font-size: 12px; }
.tbl-own { margin-top: 10px; border: solid #3f484b; border-width: 0 1px 2px; }
.tbl-inh { margin: 13px 0 0 21px; border: solid #e6e6e6; border-width: 0 1px; }
.tbl-3 { margin-top: 14px; }
.thead, .trow { display: grid; align-items: center; }
.t1 { grid-template-columns: 45px 245px 127px 295px 189px 128px 146px 142px 177px 73px 73px 73px 73px 16px; }
.t2 { grid-template-columns: 19px 245px 114px 107px 264px 266px 130px 203px 160px 65px 65px 65px 65px 13px; }
.t3 { grid-template-columns: 19px 245px 122px 113px 179px 283px 139px 141px 247px 70px 69px 69px 70px 15px; }
.thead { height: 26px; background: #3f484b; color: #fff; font-weight: bold; }
.tg { height: 25px; background: #d0d0d0; color: #555; }
.tbl-3 .tg { height: 24px; }
.trow { height: 40px; border-bottom: 1px solid #e8e8e8; color: #3f484b; }
.tbl-own .trow:last-child { border-bottom: 0; height: 39px; }
.c1 { grid-column: 1; } .c2 { grid-column: 2; } .c3 { grid-column: 3; } .c4 { grid-column: 4; } .c5 { grid-column: 5; } .c6 { grid-column: 6; } .c7 { grid-column: 7; } .c8 { grid-column: 8; } .c9 { grid-column: 9; } .c10 { grid-column: 10; } .c11 { grid-column: 11; } .c12 { grid-column: 12; } .c13 { grid-column: 13; }
.hi { width: 14px; height: 15px; justify-self: center; }
.ck { width: 12px; height: 12px; justify-self: center; margin-top: -1px; }
.t1 .ck { margin: 0 2px 0 0; }
.cb { width: 13px; height: 13px; display: block; margin: 1px 0 0 6px; border: 1px solid #555; border-radius: 2px; background: #fff; }
.cb-white { border: 0; width: 12px; height: 12px; border-radius: 0; margin-top: 0; }
.cb-off { margin-left: -1px; border-color: #ccc; background: #f7f7f7; }
.cb-on { margin-left: 0; border: 0; background: #cfcfcf; color: #f4f4f4; font: normal 11px/13px "DejaVu Sans", sans-serif; text-align: center; }
.nm { display: flex; align-items: center; gap: 5px; padding: 0 0 2px 1px; white-space: nowrap; }
.nm-1 { padding: 0 0 0 3px; gap: 4px; }
.nm a { text-decoration: underline; margin-bottom: 1px; }
.nm-1 a { margin: 1px 0 0; }
.t2 .nm, .t3 .nm { gap: 2px; }
.i14 { width: 13px; height: 13px; flex: none; margin-top: 2px; }
.i16 { width: 16px; height: 16px; flex: none; }
.i22 { width: 22px; height: 22px; flex: none; display: block; }
.src { display: flex; align-items: center; padding-left: 2px; white-space: nowrap; }
.th { width: 12px; height: 11px; flex: none; margin-right: 6px; }
.wf { width: 16px; height: 13px; flex: none; margin-right: 3px; }
.pad5 { padding-left: 5px; }
.al { display: flex; align-items: center; gap: 15px; padding-left: 11px; }
.inh { height: 16px; margin: 11px 0 0 18px; display: flex; align-items: center; gap: 4px; color: #555; white-space: nowrap; }
.chiprow { height: 25px; display: flex; align-items: center; }
.chiprow-1 { margin: 13px 0 0 27px; }
.chiprow-2 { margin: 11px 0 0 27px; }
.chip { height: 25px; display: inline-flex; align-items: center; gap: 4px; padding: 0 5px 0 4px; border: 1px solid #8c8c8c; border-radius: 2px; color: #3f484b; background: #fff; white-space: nowrap; }
.chip svg { width: 15px; height: 15px; flex: none; }
.chiprow .chip { margin-left: 4px; }
.inf { display: flex; align-items: center; gap: 7px; padding-left: 2px; }

.vbar { width: 17px; flex: none; display: flex; flex-direction: column; align-items: center; background: #fff; padding-top: 7px; }
.up, .dn { width: 0; height: 0; flex: none; border: 3.500px solid transparent; }
.up { border-top: 0; border-bottom: 5px solid #777; margin-bottom: 5px; }
.dn { border-bottom: 0; border-top: 5px solid #777; margin-bottom: 7px; }
.thumb { width: 14px; height: 711px; flex: none; background: #c8c8c8; }
.vfill { flex: 1; }
```
